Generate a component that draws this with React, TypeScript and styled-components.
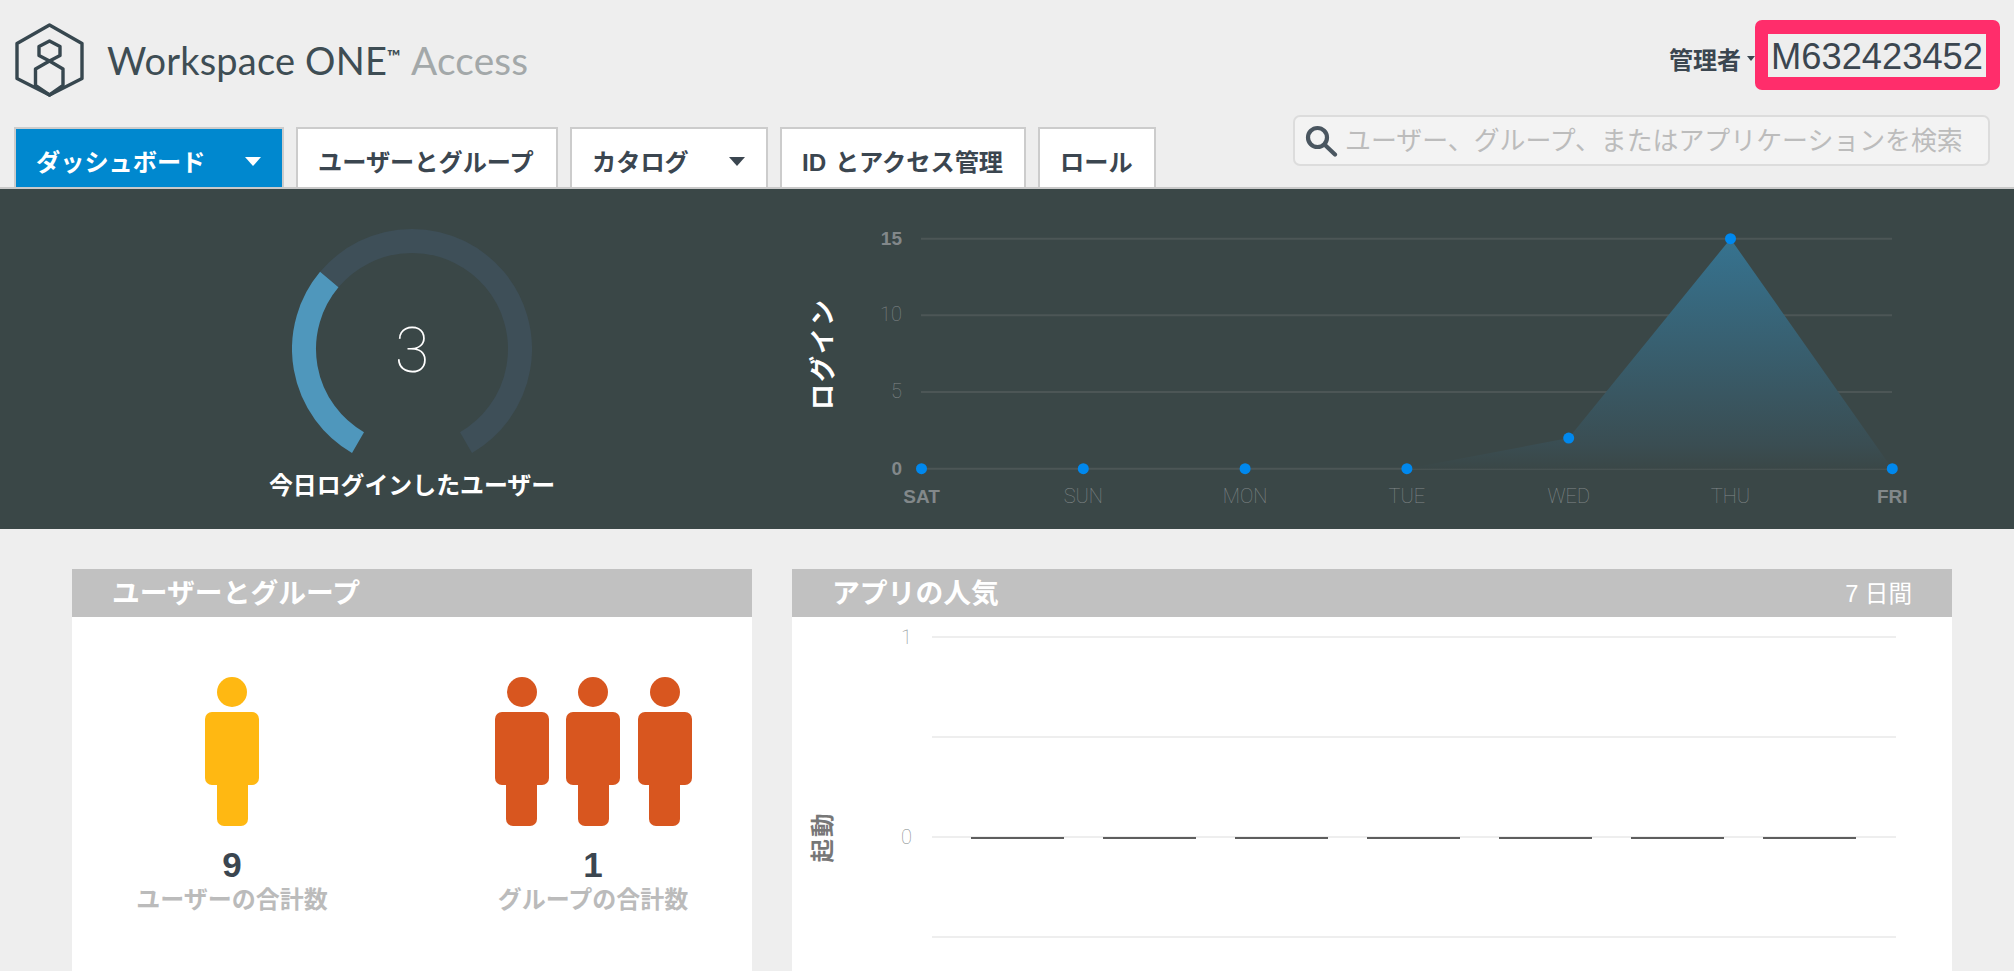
import styled, { createGlobalStyle } from 'styled-components';

const SANS = `"Liberation Sans", "Noto Sans CJK JP", sans-serif`;
const THIN = `Roboto, "Liberation Sans", sans-serif`;

const GlobalStyle = createGlobalStyle`
  html, body {
    margin: 0;
    padding: 0;
    height: 971px;
    overflow: hidden;
    background: #eeeeee;
    font-family: ${SANS};
    color: #3b4650;
  }
  * {
    box-sizing: border-box;
  }
`;

const Header = styled.header`
  height: 189px;
  border-bottom: 2px solid #c9c9c9;
`;

const TopRow = styled.div`
  height: 115px;
  padding: 20px 14px 0 15px;
  display: flex;
  justify-content: space-between;
  align-items: flex-start;
`;

const Brand = styled.div`
  display: flex;
  align-items: center;
  gap: 23px;
  padding-top: 3px;
`;

const Wordmark = styled.div`
  display: flex;
  align-items: baseline;
  font-family: Lato, sans-serif;
  font-size: 38px;
  font-weight: 400;
  letter-spacing: 0.2px;
  color: #3e4d54;
  margin-top: -1px;
  sup {
    font-size: 18px;
    font-weight: 700;
    line-height: 0;
    position: relative;
    top: -12px;
  }
  span {
    color: #a3a8a9;
    font-size: 38.8px;
    margin-left: 10px;
  }
`;

const Account = styled.div`
  display: flex;
  align-items: center;
`;

const Admin = styled.button`
  display: flex;
  align-items: center;
  gap: 6px;
  padding: 0;
  margin: 7px 0 0 0;
  border: none;
  background: none;
  font-family: ${SANS};
  font-size: 24px;
  font-weight: 700;
  color: #3b4650;
  &::after {
    content: '';
    border-top: 5px solid #3b4650;
    border-left: 4px solid transparent;
    border-right: 4px solid transparent;
  }
`;

const TenantId = styled.div`
  width: 245px;
  height: 70px;
  border-style: solid;
  border-color: #ff2d6b;
  border-width: 14px 14px 13px 13px;
  border-radius: 7px;
  background: #eeeeee;
  font-size: 36.3px;
  line-height: 45px;
  text-align: center;
  white-space: nowrap;
  color: #3b4650;
`;

const NavRow = styled.div`
  height: 72px;
  padding: 0 24px 0 14px;
  display: flex;
  justify-content: space-between;
`;

const Tabs = styled.nav`
  display: flex;
  gap: 12px;
  align-self: flex-end;
`;

const Tab = styled.a<{ $active?: boolean; $width: number }>`
  width: ${(p) => p.$width}px;
  height: 60px;
  padding: 19px 21px 0 20px;
  display: flex;
  justify-content: space-between;
  border: 2px solid #cccccc;
  border-bottom: none;
  background: ${(p) => (p.$active ? '#0088cf' : '#ffffff')};
  color: ${(p) => (p.$active ? '#ffffff' : '#3b4650')};
  font-size: 24.2px;
  font-weight: 700;
  line-height: 30px;
  word-spacing: 2px;
  white-space: nowrap;
`;

const Caret = styled.i<{ $active?: boolean }>`
  width: 0;
  height: 0;
  margin-top: 9px;
  border-top: 9px solid ${(p) => (p.$active ? '#ffffff' : '#3b4650')};
  border-left: 8px solid transparent;
  border-right: 8px solid transparent;
`;

const SearchBox = styled.div`
  width: 697px;
  height: 51px;
  padding-left: 9px;
  display: flex;
  align-items: center;
  gap: 7px;
  border: 2px solid #dcdcdc;
  border-radius: 7px;
  background: #f3f3f3;
  font-size: 25.9px;
  line-height: 30px;
  color: #bcbcbc;
  white-space: nowrap;
`;

const Summary = styled.section`
  height: 340px;
  display: flex;
  background: #3a4747;
`;

const GaugeBlock = styled.div`
  position: relative;
  width: 320px;
  margin-left: 252px;
  padding-top: 40px;
  display: flex;
  flex-direction: column;
  align-items: center;
`;

const GaugeValue = styled.div`
  position: absolute;
  top: 124px;
  left: 0;
  right: 0;
  text-align: center;
  font-family: ${THIN};
  font-size: 63px;
  font-weight: 100;
  line-height: 76px;
  color: #ffffff;
`;

const GaugeLabel = styled.div`
  margin-top: 2px;
  font-size: 23.9px;
  font-weight: 700;
  line-height: 30px;
  white-space: nowrap;
  color: #ffffff;
`;

const LoginChart = styled.svg`
  display: block;
  margin-left: 218px;
`;

const AxisText = styled.text<{ $strong?: boolean }>`
  font-family: ${(p) => (p.$strong ? SANS : THIN)};
  font-weight: ${(p) => (p.$strong ? 700 : 100)};
  font-size: ${(p) => (p.$strong ? 19 : 20)}px;
  fill: #82888a;
`;

const AxisTitle = styled.text<{ $light?: boolean }>`
  font-family: ${SANS};
  font-weight: 700;
  font-size: ${(p) => (p.$light ? 23.5 : 26)}px;
  letter-spacing: 2px;
  fill: ${(p) => (p.$light ? '#777777' : '#ffffff')};
`;

const Panels = styled.div`
  padding: 40px 0 0 72px;
  display: flex;
  gap: 40px;
`;

const Panel = styled.section<{ $width: number }>`
  width: ${(p) => p.$width}px;
  height: 402px;
  background: #ffffff;
`;

const PanelHeader = styled.div`
  height: 48px;
  padding: 1px 40px 0 40px;
  display: flex;
  align-items: center;
  justify-content: space-between;
  background: #c1c1c1;
  color: #ffffff;
`;

const PanelTitle = styled.h2`
  margin: 0;
  font-size: 27.8px;
  font-weight: 700;
  line-height: 36px;
`;

const Period = styled.span`
  font-size: 23.6px;
  line-height: 30px;
`;

const Stats = styled.div`
  padding-top: 60px;
  display: grid;
  grid-template-columns: 320px 322px;
  gap: 40px;
`;

const Stat = styled.div`
  display: flex;
  flex-direction: column;
  align-items: center;
`;

const People = styled.div`
  display: flex;
  gap: 17.5px;
`;

const Person = styled.div`
  width: 54px;
  display: flex;
  flex-direction: column;
  align-items: center;
`;

const Head = styled.div<{ $color: string }>`
  width: 30px;
  height: 30px;
  border-radius: 50%;
  background: ${(p) => p.$color};
`;

const Torso = styled.div<{ $color: string }>`
  width: 54px;
  height: 73px;
  margin-top: 5px;
  border-radius: 7px;
  background: ${(p) => p.$color};
`;

const Legs = styled.div<{ $color: string }>`
  width: 31px;
  height: 41px;
  border-radius: 0 0 7px 7px;
  background: ${(p) => p.$color};
`;

const StatNumber = styled.div`
  margin-top: 19px;
  font-size: 35px;
  font-weight: 700;
  line-height: 40px;
  color: #3b4650;
`;

const StatLabel = styled.div`
  font-size: 24px;
  font-weight: 700;
  line-height: 29px;
  color: #bbbbbb;
`;

const AppsChart = styled.svg`
  display: block;
`;

const TABS = [
  { label: 'ダッシュボード', width: 270, active: true, menu: true },
  { label: 'ユーザーとグループ', width: 262 },
  { label: 'カタログ', width: 198, menu: true },
  { label: 'ID とアクセス管理', width: 246 },
  { label: 'ロール', width: 118 },
];

const DAYS = ['SAT', 'SUN', 'MON', 'TUE', 'WED', 'THU', 'FRI'];
const DAY_X = DAYS.map((_, i) => 921.5 + i * 161.8);
const LOGINS = [0, 0, 0, 0, 2, 15, 0];
const loginY = (v: number) => 468.7 - (v * 230) / 15;

const polar = (r: number, deg: number) => {
  const a = (deg * Math.PI) / 180;
  return `${120 + r * Math.sin(a)} ${120 - r * Math.cos(a)}`;
};

const arc = (from: number, to: number) =>
  `M${polar(108, from)} A108 108 0 ${to - from > 180 ? 1 : 0} 1 ${polar(108, to)}`;

const Figure = ({ color }: { color: string }) => (
  <Person>
    <Head $color={color} />
    <Torso $color={color} />
    <Legs $color={color} />
  </Person>
);

export default function App() {
  return (
    <>
      <GlobalStyle />
      <Header>
        <TopRow>
          <Brand>
            <svg width="69" height="74" viewBox="5 5 69 74" fill="none" stroke="#37474f" strokeWidth="3.4" strokeLinejoin="round">
              <path d="M39.5 7 72 25.5v35L39.5 77 7 60.5v-35z" />
              <path d="M39.5 23 50 28.5v9L39.5 43 29 37.5v-9z" />
              <path d="M39.5 43 53 51v16.5L39.5 77 25.5 67.5V51z" />
            </svg>
            <Wordmark>
              Workspace ONE<sup>™</sup>
              <span>Access</span>
            </Wordmark>
          </Brand>
          <Account>
            <Admin>管理者</Admin>
            <TenantId>M632423452</TenantId>
          </Account>
        </TopRow>
        <NavRow>
          <Tabs>
            {TABS.map((t) => (
              <Tab key={t.label} $active={t.active} $width={t.width}>
                {t.label}
                {t.menu && <Caret $active={t.active} />}
              </Tab>
            ))}
          </Tabs>
          <SearchBox>
            <svg width="34" height="32" viewBox="0 0 34 32" fill="none" stroke="#4a5660" strokeLinecap="round">
              <circle cx="13.5" cy="12.5" r="9.5" strokeWidth="4.2" />
              <path d="M21 20 31 29.5" strokeWidth="4.2" />
            </svg>
            ユーザー、グループ、またはアプリケーションを検索
          </SearchBox>
        </NavRow>
      </Header>

      <Summary>
        <GaugeBlock>
          <svg width="240" height="240" viewBox="0 0 240 240" fill="none" strokeWidth="24">
            <path d={arc(310, 510)} stroke="#3e4f58" />
            <path d={arc(210, 310)} stroke="#4f97bc" />
          </svg>
          <GaugeValue>3</GaugeValue>
          <GaugeLabel>今日ログインしたユーザー</GaugeLabel>
        </GaugeBlock>

        <LoginChart width="1150" height="340" viewBox="790 189 1150 340">
          <defs>
            <linearGradient id="loginArea" x1="0" y1="0" x2="0" y2="1">
              <stop offset="0" stopColor="#367390" />
              <stop offset="0.9" stopColor="#3a4d52" />
              <stop offset="1" stopColor="#3a4747" />
            </linearGradient>
          </defs>
          {[15, 10, 5, 0].map((v) => (
            <g key={v}>
              <line x1="921" x2="1892" y1={loginY(v)} y2={loginY(v)} stroke="#4c5656" strokeWidth="2" />
              <AxisText $strong={v === 15 || v === 0} x="902" y={loginY(v) + 6} textAnchor="end">
                {v}
              </AxisText>
            </g>
          ))}
          <path
            d={`M${DAY_X[3]} ${loginY(0)} L${DAY_X[4]} ${loginY(2)} L${DAY_X[5]} ${loginY(15)} L${DAY_X[6]} ${loginY(0)}Z`}
            fill="url(#loginArea)"
          />
          {DAYS.map((d, i) => (
            <g key={d}>
              <circle cx={DAY_X[i]} cy={loginY(LOGINS[i])} r="5.5" fill="#0088ee" />
              <AxisText $strong={i === 0 || i === 6} x={DAY_X[i]} y="503" textAnchor="middle">
                {d}
              </AxisText>
            </g>
          ))}
          <AxisTitle transform="translate(832 354) rotate(-90)" textAnchor="middle">
            ログイン
          </AxisTitle>
        </LoginChart>
      </Summary>

      <Panels>
        <Panel $width={680}>
          <PanelHeader>
            <PanelTitle>ユーザーとグループ</PanelTitle>
          </PanelHeader>
          <Stats>
            <Stat>
              <People>
                <Figure color="#ffb812" />
              </People>
              <StatNumber>9</StatNumber>
              <StatLabel>ユーザーの合計数</StatLabel>
            </Stat>
            <Stat>
              <People>
                <Figure color="#d8561f" />
                <Figure color="#d8561f" />
                <Figure color="#d8561f" />
              </People>
              <StatNumber>1</StatNumber>
              <StatLabel>グループの合計数</StatLabel>
            </Stat>
          </Stats>
        </Panel>

        <Panel $width={1160}>
          <PanelHeader>
            <PanelTitle>アプリの人気</PanelTitle>
            <Period>7 日間</Period>
          </PanelHeader>
          <AppsChart width="1160" height="354" viewBox="792 617 1160 354">
            {[637, 737, 837, 937].map((y) => (
              <line key={y} x1="932" x2="1896" y1={y} y2={y} stroke="#eeeeee" strokeWidth="2" />
            ))}
            {[0, 1, 2, 3, 4, 5, 6].map((i) => (
              <rect key={i} x={971 + i * 132} y="837" width="93" height="2" fill="#5e5e5e" />
            ))}
            <AxisText x="912" y="644" textAnchor="end">1</AxisText>
            <AxisText x="912" y="844" textAnchor="end">0</AxisText>
            <AxisTitle $light transform="translate(831 837) rotate(-90)" textAnchor="middle">
              起動
            </AxisTitle>
          </AppsChart>
        </Panel>
      </Panels>
    </>
  );
}
